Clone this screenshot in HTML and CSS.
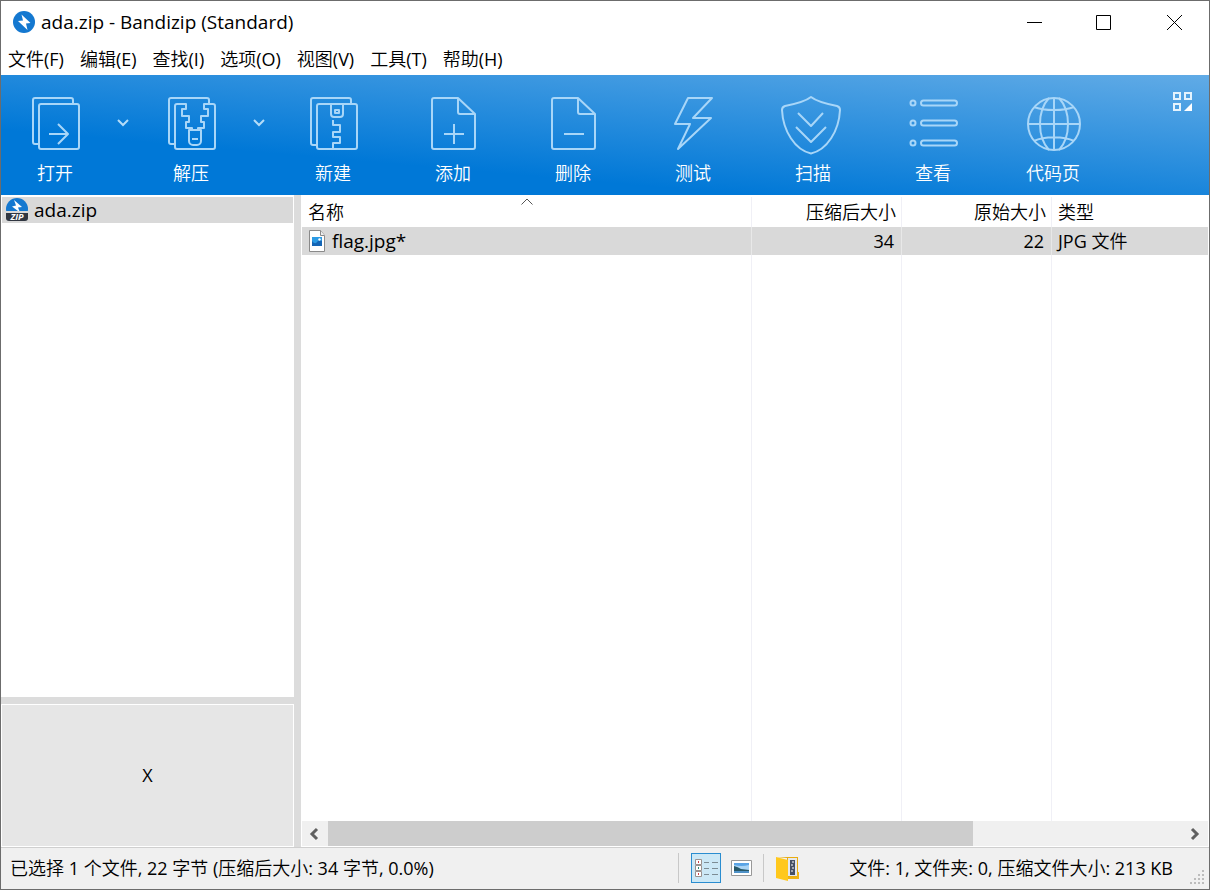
FILE: index.html
```html
<!DOCTYPE html>
<html lang="zh-CN">
<head>
<meta charset="utf-8">
<title>ada.zip - Bandizip (Standard)</title>
<link rel="stylesheet" href="styles.css">
</head>
<body>
<div class="window">
  <header class="titlebar">
    <svg class="app-icon" viewBox="0 0 24 24" aria-hidden="true"><circle cx="12" cy="12" r="11" fill="#1478d0"/><path d="M9.500 4.500L18.500 13l-4.500.500 1.500 6.500L6 11l5-.5z" fill="#fff"/></svg>
    <h1 class="title">ada.zip - Bandizip (Standard)</h1>
    <div class="window-controls">
      <button class="win-btn" aria-label="最小化"><svg viewBox="0 0 16 16"><path d="M1 8.500h15"/></svg></button>
      <button class="win-btn" aria-label="最大化"><svg viewBox="0 0 16 16"><path d="M.5 1.500h14v14H.5z"/></svg></button>
      <button class="win-btn" aria-label="关闭"><svg viewBox="0 0 16 16"><path d="M1 1l15 15M16 1L1 16"/></svg></button>
    </div>
  </header>
  <nav class="menubar">
    <button>文件(F)</button><button>编辑(E)</button><button>查找(I)</button><button>选项(O)</button><button>视图(V)</button><button>工具(T)</button><button>帮助(H)</button>
  </nav>
  <div class="toolbar">
    <button class="tool tool-split">
      <svg viewBox="0 0 60 60"><path d="M14 49h-4a2 2 0 0 1-2-2V5a2 2 0 0 1 2-2h36a2 2 0 0 1 2 2v4"/><rect x="14" y="9" width="40" height="45" rx="2"/><path d="M24 39h19M33 29l10 10-10 10"/></svg>
      <span>打开</span>
    </button>
    <button class="drop" aria-label="打开选项"><svg viewBox="0 0 12 8"><path d="M1 1l5 5 5-5"/></svg></button>
    <button class="tool tool-split">
      <svg viewBox="0 0 60 60"><path d="M14 49h-4a2 2 0 0 1-2-2V5a2 2 0 0 1 2-2h36a2 2 0 0 1 2 2v4"/><path d="M31 35v-2h-6v-6h3v-6h-7v-7h4V9h-9a2 2 0 0 0-2 2v41a2 2 0 0 0 2 2h36a2 2 0 0 0 2-2V11a2 2 0 0 0-2-2h-9v5h4v7h-7v6h3v6h-6v2"/><path d="M28 35h12v11a4 4 0 0 1-4 4h-4a4 4 0 0 1-4-4z"/><path d="M31 44h6"/></svg>
      <span>解压</span>
    </button>
    <button class="drop" aria-label="解压选项"><svg viewBox="0 0 12 8"><path d="M1 1l5 5 5-5"/></svg></button>
    <button class="tool">
      <svg viewBox="0 0 60 60"><path d="M14 50h-4a2 2 0 0 1-2-2V5a2 2 0 0 1 2-2h36a2 2 0 0 1 2 2v4"/><rect x="14" y="9" width="40" height="45" rx="2"/><path d="M28 9v10a3 3 0 0 0 3 3h6a3 3 0 0 0 3-3V9M30 25v5h7v7h-7v5h7v6h-7v6"/><rect x="32" y="15" width="4" height="3"/></svg>
      <span>新建</span>
    </button>
    <button class="tool">
      <svg viewBox="0 0 60 60"><path d="M11 3h24l17 16v33a2 2 0 0 1-2 2H11a2 2 0 0 1-2-2V5a2 2 0 0 1 2-2zM35 3v14a2 2 0 0 0 2 2h15M21 39h20M31 29v20"/></svg>
      <span>添加</span>
    </button>
    <button class="tool">
      <svg viewBox="0 0 60 60"><path d="M11 3h24l17 16v33a2 2 0 0 1-2 2H11a2 2 0 0 1-2-2V5a2 2 0 0 1 2-2zM35 3v14a2 2 0 0 0 2 2h15M21 39h20"/></svg>
      <span>删除</span>
    </button>
    <button class="tool">
      <svg viewBox="0 0 60 60"><path d="M25 3h24L30 23h18L15 54l12-25H12z"/></svg>
      <span>测试</span>
    </button>
    <button class="tool">
      <svg viewBox="0 0 60 60"><path d="M28 2C33 6 44 9 54 11Q57 12 57 15C56 36 44 55 28 58.500C12 55 0 36-1 15Q-1 12 2 11C12 9 23 6 28 2zM15 18l13 13 12-13M13 32l15 15 15-15"/></svg>
      <span>扫描</span>
    </button>
    <button class="tool">
      <svg viewBox="0 0 60 60"><circle cx="10" cy="8" r="2.500"/><circle cx="10" cy="28" r="2.500"/><circle cx="10" cy="48" r="2.500"/><rect x="18" y="5.500" width="36" height="5" rx="2.500"/><rect x="18" y="25.500" width="36" height="5" rx="2.500"/><rect x="18" y="45.500" width="36" height="5" rx="2.500"/></svg>
      <span>查看</span>
    </button>
    <button class="tool">
      <svg viewBox="0 0 60 60"><circle cx="31" cy="29" r="26"/><path d="M31 3v52M5 29h52M26 3C14 16 14 42 26 55M36 3C48 16 48 42 36 55M11 12c10 4 30 4 40 0M11 46c10-5 30-5 40 0"/></svg>
      <span>代码页</span>
    </button>
    <button class="customize" aria-label="自定义工具栏"><svg viewBox="0 0 20 20"><path d="M1 1h6v6H1zM12 1h6v6h-6zM1 12h6v6H1z"/><path d="M19 11v8h-8z" fill="#fff" stroke="none"/></svg></button>
  </div>
  <main class="content">
    <aside class="side">
      <ul class="tree">
        <li class="tree-item selected">
          <svg viewBox="0 0 24 24" aria-hidden="true"><circle cx="12" cy="11" r="11" fill="#1478d0"/><path d="M9 2l8 7-4 .5 2 5-8-6 4-1z" fill="#fff"/><path d="M0 13h24v2H0z" fill="#d9d9d9"/><path d="M1 15h22v5q0 3-3 3H4q-3 0-3-3z" fill="#303641"/><text x="12" y="22" class="zip-mark">ZIP</text></svg>
          <span>ada.zip</span>
        </li>
      </ul>
      <div class="preview">X</div>
    </aside>
    <section class="files">
      <div class="table-wrap">
        <table>
          <colgroup><col class="col-name"><col class="col-size"><col class="col-size"><col></colgroup>
          <thead>
            <tr><th class="sorted">名称<svg class="sort" viewBox="0 0 12 7" aria-hidden="true"><path d="M.5 6.500L6 1l5.500 5.500"/></svg></th><th class="num">压缩后大小</th><th class="num">原始大小</th><th>类型</th></tr>
          </thead>
          <tbody>
            <tr class="selected">
              <td><div class="file-name"><svg viewBox="0 0 18 22" aria-hidden="true"><path d="M1.500.500h11l4 5v16h-15z" fill="#fff" stroke="#8a8a8a"/><path d="M12.500.500v5h4" fill="#eee" stroke="#8a8a8a"/><path d="M4 7h10v9H4z" fill="#1565b5"/><path d="M4 7h10v4q-3-2-5 1t-5-1z" fill="#2c9be4"/><circle cx="11.500" cy="9.500" r="1.200" fill="#fff"/></svg>flag.jpg*</div></td>
              <td class="num">34</td><td class="num">22</td><td>JPG 文件</td>
            </tr>
            <tr class="filler"><td></td><td></td><td></td><td></td></tr>
          </tbody>
        </table>
      </div>
      <div class="scrollbar">
        <button aria-label="向左滚动"><svg viewBox="0 0 10 12"><path d="M7 1L2 6l5 5"/></svg></button>
        <div class="track"><div class="thumb"></div></div>
        <button aria-label="向右滚动"><svg viewBox="0 0 10 12"><path d="M2 1l5 5-5 5"/></svg></button>
      </div>
    </section>
  </main>
  <footer class="statusbar">
    <p class="selection">已选择 1 个文件, 22 字节 (压缩后大小: 34 字节, 0.0%)</p>
    <div class="view-modes">
      <button class="mode active" aria-label="详细信息"><svg viewBox="0 0 28 28"><g fill="#fff" stroke="#9b918e"><path d="M3.500 5.500h6v5h-6zM3.500 11.500h6v5h-6zM3.500 17.500h6v5h-6z"/></g><path d="M6 8h1M6 20h1" stroke="#d0404a" stroke-width="2"/><path d="M6 14h1" stroke="#2c8a70" stroke-width="2"/><path d="M12 8.500h5M20 8.500h6M12 14.500h5M20 14.500h6M12 20.500h5M20 20.500h6" stroke="#7d8c94"/></svg></button>
      <button class="mode" aria-label="大图标"><svg viewBox="0 0 28 28"><path d="M4.500 6.500h20v15h-20z" fill="#fff" stroke="#989898"/><path d="M7 9h15v10H7z" fill="#a9d4f5"/><path d="M7 9h15v2q-8 2-15 0z" fill="#5aa4e6"/><path d="M7 12q4 1 7 3l8 1v1H7z" fill="#275868"/><path d="M7 17h15v2H7z" fill="#4f92c8"/></svg></button>
    </div>
    <div class="archive-kind">
      <svg viewBox="0 0 26 28" aria-hidden="true"><path d="M2 3h21v21H12V4z" fill="#e9ac10"/><path d="M13 4h9v18h-9z" fill="#e4e8ee"/><path d="M15 6h5v15h-5z" fill="#465064"/><path d="M17 8h2M16 11h2M17 14h2M16 17h2" stroke="#fff"/><path d="M22 18h2v7H12v-2h10z" fill="#f0b414"/><path d="M1 3l12 3v21L1 24z" fill="#ffc81c"/></svg>
    </div>
    <p class="totals">文件: 1, 文件夹: 0, 压缩文件大小: 213 KB</p>
    <svg class="grip" viewBox="0 0 16 16" aria-hidden="true"><path d="M13 1h2v2h-2zM13 5h2v2h-2zM9 5h2v2H9zM13 9h2v2h-2zM9 9h2v2H9zM5 9h2v2H5zM13 13h2v2h-2zM9 13h2v2H9zM5 13h2v2H5zM1 13h2v2H1z"/></svg>
  </footer>
</div>
</body>
</html>
```
FILE: styles.css
```css
* { box-sizing: border-box; }
body {
  margin: 0;
  color: #000;
  font: 400 18px/24px "Open Sans", "Noto Sans CJK SC DemiLight", "Noto Sans CJK SC", sans-serif;
}
button {
  margin: 0;
  padding: 0;
  border: 0;
  background: none;
  color: inherit;
  font: inherit;
}
svg { display: block; fill: none; overflow: visible; }
p, h1, ul { margin: 0; padding: 0; font: inherit; }

.window {
  display: flex;
  flex-direction: column;
  min-height: 100vh;
  border: 1px solid #6c6c6c;
  background: #fff;
}

.titlebar { display: flex; align-items: center; height: 42px; padding-left: 11px; }
.app-icon { width: 24px; height: 24px; margin-right: 5px; }
.title { flex: 1; font-size: 19px; }
.window-controls { display: flex; }
.win-btn { display: grid; place-items: center; width: 70px; height: 42px; }
.win-btn svg { width: 16px; height: 16px; stroke: #000; }

.menubar { display: flex; gap: 16px; height: 32px; padding: 0 7px; }
.menubar button { height: 32px; white-space: nowrap; }

.toolbar {
  position: relative;
  display: flex;
  height: 120px;
  color: #fff;
  font-weight: 350;
  background: linear-gradient(5deg, #0078d7 29%, #61abe6 100%);
}
.tool {
  display: flex;
  flex-direction: column;
  align-items: center;
  gap: 6px;
  width: 120px;
  padding-top: 20px;
}
.tool-split { width: 108px; }
.tool svg { width: 60px; height: 60px; stroke: #a8d6f8; stroke-width: 2; stroke-linejoin: round; }
.drop { display: grid; place-items: center; width: 28px; height: 96px; }
.drop svg { width: 12px; height: 8px; stroke: #b4dcf8; stroke-width: 2; }
.customize { position: absolute; top: 17px; right: 16px; }
.customize svg { width: 20px; height: 20px; stroke: #e4f3fd; stroke-width: 2; }

.content {
  flex: 1;
  display: grid;
  grid-template-columns: 293px 1fr;
  gap: 7px;
  background: #dcdcdc;
}
.side { display: flex; flex-direction: column; gap: 7px; }
.tree { flex: 1; padding: 2px 1px; background: #fff; list-style: none; }
.tree-item { display: flex; align-items: center; gap: 5px; height: 26px; padding-left: 3px; font-size: 19px; }
.tree-item svg { width: 24px; height: 24px; }
.selected { background: #d9d9d9; }
.zip-mark { fill: #fff; font: italic bold 9px "Open Sans", sans-serif; text-anchor: middle; }
.preview {
  display: grid;
  place-items: center;
  height: 143px;
  padding-bottom: 2px;
  border: 1px solid #fff;
  background: #e6e6e6;
}

.files {
  display: flex;
  flex-direction: column;
  padding: 2px 1px 1px;
  background: #fff;
}
.table-wrap { flex: 1; display: grid; }
table { width: 100%; height: 100%; border-collapse: separate; border-spacing: 0; table-layout: fixed; }
.col-name { width: 450px; }
.col-size { width: 150px; }
th, td { padding: 0 6px; border-right: 1px solid #f0f0f6; text-align: left; }
th:last-child, td:last-child { border-right: 0; }
th { height: 30px; font-weight: 350; }
td { height: 28px; }
tr.selected td { border-right-color: #e8e8e8; }
tr.filler td { height: auto; }
.num { padding-right: 7px; text-align: right; }
th.num { padding-right: 5px; }
.sorted { position: relative; }
.sort { position: absolute; top: 1px; left: calc(50% - 6px); width: 12px; height: 7px; stroke: #555; }
.file-name { display: flex; align-items: center; gap: 6px; font-size: 19px; }
.file-name svg { width: 18px; height: 22px; }

.scrollbar { display: flex; height: 25px; background: #f0f0f0; }
.scrollbar button { display: grid; place-items: center; width: 26px; }
.scrollbar svg { width: 10px; height: 12px; stroke: #606060; stroke-width: 3; }
.track { flex: 1; display: flex; }
.thumb { width: 75.500%; background: #cdcdcd; }

.statusbar {
  display: flex;
  align-items: center;
  height: 42px;
  padding: 0 0 2px 9px;
  border-top: 1px solid #cfcfcf;
  background: #f0f0f0;
}
.statusbar p { white-space: nowrap; }
.selection { flex: 1; }
.view-modes { display: flex; gap: 5px; padding: 0 7px 0 12px; border-left: 1px solid #c8c8c8; }
.mode { width: 30px; height: 30px; border: 1px solid transparent; }
.mode svg { width: 28px; height: 28px; }
.mode.active { border-color: #2a8dd0; background: #cce8f6; }
.archive-kind { padding-left: 11px; border-left: 1px solid #c8c8c8; }
.archive-kind svg { width: 26px; height: 28px; }
.totals { width: 372px; text-align: right; }
.grip { align-self: flex-end; width: 16px; height: 16px; margin: 0 4px 2px 16px; fill: #bcbcbc; }
```
